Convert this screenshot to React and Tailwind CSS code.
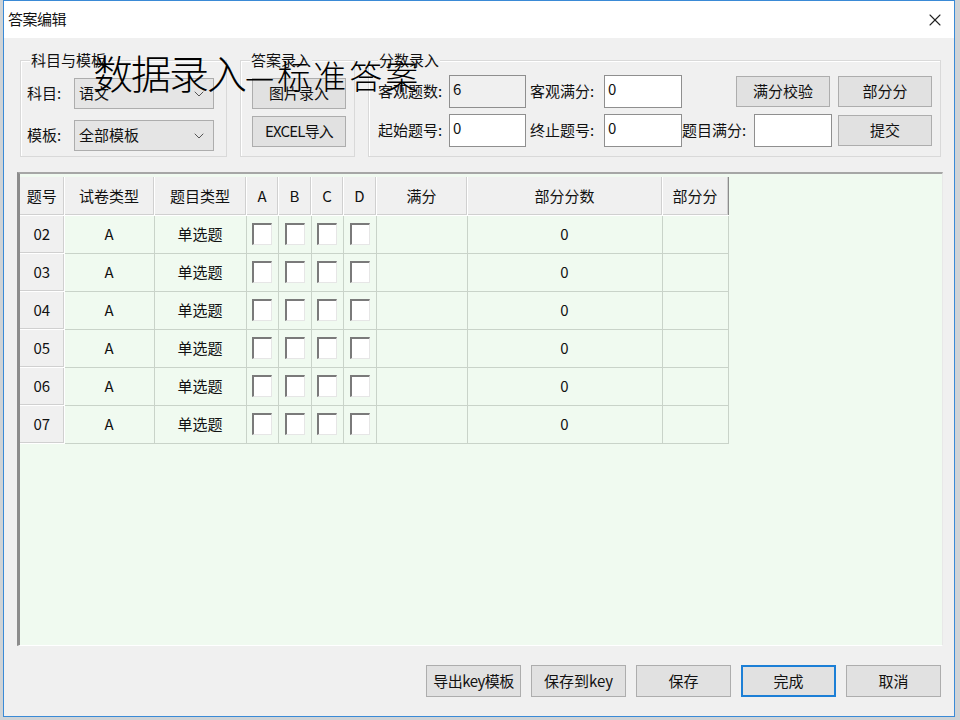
import { ChevronDown, X } from "lucide-react";

const rows = ["02", "03", "04", "05", "06", "07"];

const Btn = ({ children, className = "", border = "border border-[#adadad]" }) => (
  <button
    className={`h-[31px] w-[94px] ${border} bg-[#e1e1e1] text-[15px] text-[#111] ${className}`}
  >
    {children}
  </button>
);

const Field = ({ value, readOnly, w = "w-[78px]" }) => (
  <div
    className={`h-[33px] ${w} border border-[#8f8f8f] px-[3px] pt-[3px] text-[15px] leading-[20px] ${
      readOnly ? "bg-[#f0f0f0]" : "bg-white"
    }`}
  >
    {value}
  </div>
);

const Combo = ({ value }) => (
  <div className="flex h-[31px] w-[140px] items-center justify-between border border-[#adadad] bg-[#e5e5e5] pl-[4px] pr-[6px] text-[15px]">
    <span>{value}</span>
    <ChevronDown size={16} strokeWidth={1.5} className="text-[#555]" />
  </div>
);

const Group = ({ title, className = "", children }) => (
  <div className={`relative h-[97px] border border-[#d9d9d9] shadow-[inset_1px_1px_0_#ffffff] ${className}`}>
    <span className="absolute -top-[10px] left-[9px] bg-[#f0f0f0] px-[1px] text-[15px] leading-[18px]">
      {title}
    </span>
    {children}
  </div>
);

const Check = () => (
  <div className="mx-auto h-[22px] w-[20px] border-l-2 border-t-2 border-[#7a7a7a] border-b border-r border-b-[#e6e6e6] border-r-[#e6e6e6] bg-white" />
);

const headCell = "border-r border-b border-[#ffffff] bg-[#f0f0f0] shadow-[inset_-1px_-1px_0_#d0d0d0] font-normal";

export default function App() {
  return (
    <div
      className="relative h-[720px] w-[960px] overflow-hidden bg-[#cfd3d6] text-[#111]"
      style={{ fontFamily: '"Noto Sans CJK SC", "Noto Sans", sans-serif' }}
    >
      <div className="ml-[3px] flex h-[717px] w-[952px] flex-col border border-[#3a8ad6] bg-[#f0f0f0]">
        {/* title bar */}
        <div className="flex h-[37px] items-center justify-between bg-white pl-[4px] pr-[9px]">
          <span className="text-[15px] tracking-[-0.5px]">答案编辑</span>
          <X size={20} strokeWidth={1.3} className="text-[#222]" />
        </div>

        {/* top groups */}
        <div className="flex gap-[13px] pl-[16px] pt-[22px]">
          <Group title="科目与模板" className="w-[207px]">
            <div className="flex flex-col gap-[11px] pl-[6px] pt-[17px]">
              <div className="flex items-center">
                <span className="w-[47px] text-[15px]">科目:</span>
                <Combo value="语文" />
              </div>
              <div className="flex items-center">
                <span className="w-[47px] text-[15px]">模板:</span>
                <Combo value="全部模板" />
              </div>
            </div>
          </Group>

          <Group title="答案录入" className="w-[115px]">
            <div className="flex flex-col gap-[7px] pl-[11px] pt-[17px]">
              <Btn>图片录入</Btn>
              <Btn className="tracking-[-0.8px]">EXCEL导入</Btn>
            </div>
          </Group>

          <Group title="分数录入" className="w-[573px]">
            <div className="flex flex-col gap-[6px] pl-[9px] pt-[14px]">
              <div className="flex items-center">
                <span className="w-[71px] text-[15px]">客观题数:</span>
                <Field value="6" readOnly w="w-[77px]" />
                <span className="w-[78px] pl-[4px] text-[15px]">客观满分:</span>
                <Field value="0" />
                <div className="w-[54px]" />
                <Btn>满分校验</Btn>
                <div className="w-[8px]" />
                <Btn>部分分</Btn>
              </div>
              <div className="flex items-center">
                <span className="w-[71px] text-[15px]">起始题号:</span>
                <Field value="0" w="w-[77px]" />
                <span className="w-[78px] pl-[4px] text-[15px]">终止题号:</span>
                <Field value="0" />
                <span className="w-[72px] text-[15px]">题目满分:</span>
                <Field value="" />
                <div className="w-[6px]" />
                <Btn>提交</Btn>
              </div>
            </div>
          </Group>
        </div>

        {/* grid */}
        <div className="ml-[13px] mr-[11px] mt-[15px] h-[474px] border-l-[3px] border-t-2 border-l-[#8c8c8c] border-t-[#a6a6a6] border-r border-b border-r-[#e8e8e8] border-b-[#ffffff] bg-[#f0faf0] pt-[3px]">
          <table className="border-collapse text-[15px]">
            <thead>
              <tr className="h-[38px]">
                <th className={`${headCell} w-[44px]`}>题号</th>
                <th className={`${headCell} w-[90px]`}>试卷类型</th>
                <th className={`${headCell} w-[92px]`}>题目类型</th>
                <th className={`${headCell} w-[32px]`}>A</th>
                <th className={`${headCell} w-[33px]`}>B</th>
                <th className={`${headCell} w-[32px]`}>C</th>
                <th className={`${headCell} w-[33px]`}>D</th>
                <th className={`${headCell} w-[91px]`}>满分</th>
                <th className={`${headCell} w-[195px]`}>部分分数</th>
                <th className={`${headCell} w-[66px] border-r-[#8c8c8c] shadow-[inset_-1px_-1px_0_#8c8c8c]`}>部分分</th>
              </tr>
            </thead>
            <tbody>
              {rows.map((r) => (
                <tr key={r} className="h-[38px]">
                  <td className={`${headCell} text-center`}>{r}</td>
                  <td className="border border-[#c9d3c9] text-center">A</td>
                  <td className="border border-[#c9d3c9] text-center">单选题</td>
                  {[0, 1, 2, 3].map((i) => (
                    <td key={i} className="border border-[#c9d3c9]">
                      <Check />
                    </td>
                  ))}
                  <td className="border border-[#c9d3c9]" />
                  <td className="border border-[#c9d3c9] text-center">0</td>
                  <td className="border border-[#c9d3c9]" />
                </tr>
              ))}
            </tbody>
          </table>
        </div>

        {/* bottom buttons */}
        <div className="flex justify-end gap-[10px] pr-[13px] pt-[19px]">
          <Btn className="h-[32px] w-[95px] tracking-[-0.5px]">导出key模板</Btn>
          <Btn className="h-[32px] w-[95px]">保存到key</Btn>
          <Btn className="h-[32px] w-[95px]">保存</Btn>
          <Btn className="h-[32px] w-[95px]" border="border-2 border-[#1c7fd6]">完成</Btn>
          <Btn className="h-[32px] w-[95px]">取消</Btn>
        </div>
      </div>

      {/* overlay caption */}
      <div className="absolute left-[93px] top-[52px] flex items-baseline whitespace-nowrap font-light leading-none text-black">
        <span className="text-[40px] tracking-[-2px]">数据录入</span>
        <span className="text-[33px] tracking-[3px]">—标准答案</span>
      </div>
    </div>
  );
}
